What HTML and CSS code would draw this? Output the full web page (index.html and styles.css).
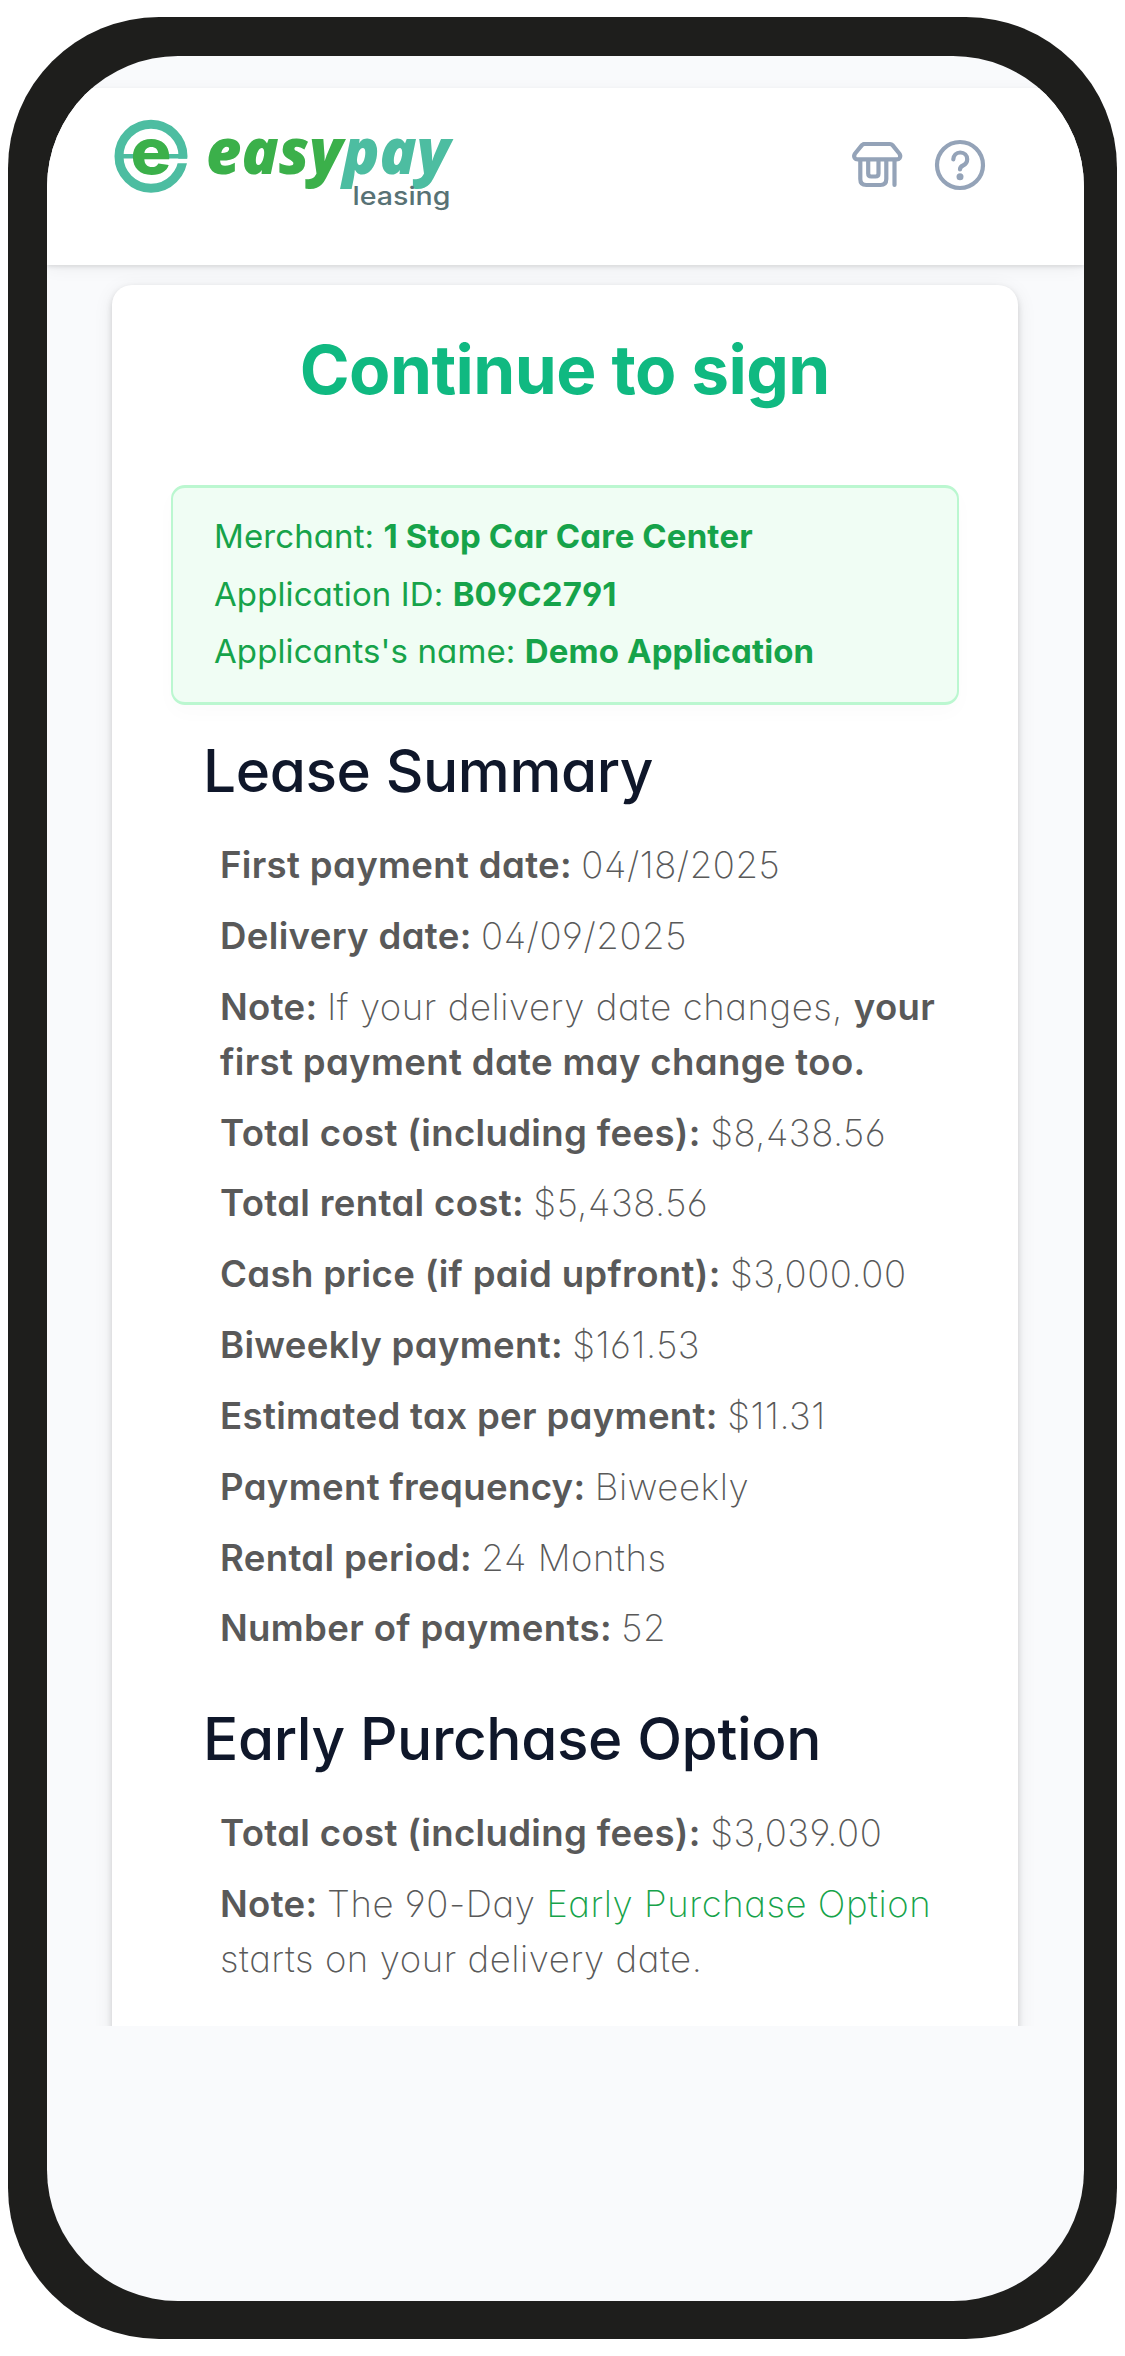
FILE: index.html
```html
<!DOCTYPE html>
<html lang="en">
<head>
<meta charset="utf-8">
<title>Continue to sign</title>
<link rel="stylesheet" href="styles.css">
</head>
<body>
<div class="phone">
  <div class="screen">
    <header class="topbar">
      <svg class="logo" width="350" height="110" viewBox="110 110 350 110" role="img" aria-label="easypay leasing">
        <circle cx="151" cy="156.2" r="32" fill="none" stroke="#4dbda1" stroke-width="9"/>
        <path d="M171 161h18" stroke="#fff" stroke-width="4.4"/>
        <path d="M122 156.3h65" stroke="#4dbda1" stroke-width="4.6"/>
        <text class="logo-e" x="130.5" y="173.500" textLength="41" lengthAdjust="spacingAndGlyphs">e</text>
        <text class="logo-word" x="206" y="174" textLength="244" lengthAdjust="spacingAndGlyphs"><tspan fill="#3bb04a">easy</tspan><tspan fill="#4dbda1">pay</tspan></text>
        <text class="logo-sub" x="352.500" y="205" textLength="98" lengthAdjust="spacingAndGlyphs">leasing</text>
      </svg>
      <nav class="actions">
        <svg width="54" height="54" viewBox="850 138 54 54" class="icon">
          <path d="M863.5 144h26.500q1.500 0 2.500 1.200l6.800 8.300q1.700 2.300.4 4.500q-1 1.400-3 1.400h-39q-2 0-3-1.400q-1.300-2.200.4-4.500l6.800-8.300q1-1.200 2.600-1.200z"/>
          <path d="M860.300 160v19q0 6 6 6h14q6 0 6-6v-19M868.200 160v13.500q0 3 3 3h4.300q3 0 3-3v-13.500M894.500 160v25"/>
        </svg>
        <svg width="54" height="54" viewBox="932.700 137.700 54 54" class="icon">
          <circle cx="959.7" cy="164.700" r="23"/>
          <path d="M953 159c.3-4 3-6.800 6.900-6.800c4.200 0 7 2.900 7 6.700c0 3-1.500 5-4.200 6.300c-2.200 1-3 1.700-3 4"/>
          <circle class="dot" cx="959.700" cy="176.400" r="3.500"/>
        </svg>
      </nav>
    </header>
    <main class="view">
      <section class="card">
        <h1>Continue to sign</h1>
        <div class="info">
          <p>Merchant: <b>1 Stop Car Care Center</b></p>
          <p>Application ID: <b>B09C2791</b></p>
          <p>Applicants's name: <b>Demo Application</b></p>
        </div>
        <h2>Lease Summary</h2>
        <div class="details">
          <p><b>First payment date:</b> 04/18/2025</p>
          <p><b>Delivery date:</b> 04/09/2025</p>
          <p><b>Note:</b> If your delivery date changes, <b>your<br>first payment date may change too.</b></p>
          <p><b>Total cost (including fees):</b> $8,438.56</p>
          <p><b>Total rental cost:</b> $5,438.56</p>
          <p><b>Cash price (if paid upfront):</b> $3,000.00</p>
          <p><b>Biweekly payment:</b> $161.53</p>
          <p><b>Estimated tax per payment:</b> $11.31</p>
          <p><b>Payment frequency:</b> Biweekly</p>
          <p><b>Rental period:</b> 24 Months</p>
          <p><b>Number of payments:</b> 52</p>
        </div>
        <h2 class="second">Early Purchase Option</h2>
        <div class="details">
          <p><b>Total cost (including fees):</b> $3,039.00</p>
          <p><b>Note:</b> The 90-Day <a>Early Purchase Option</a><br>starts on your delivery date.</p>
        </div>
      </section>
    </main>
  </div>
</div>
</body>
</html>
```
FILE: styles.css
```css
* { box-sizing: border-box; }
body {
  margin: 0;
  padding: 17px 8px;
  background: #fff;
  font-family: Inter, "Liberation Sans", sans-serif;
  font-feature-settings: "cv11", "cv02", "cv03", "cv04";
}
h1, h2, p { margin: 0; }
.phone {
  height: 2322px;
  padding: 38.500px 33px 38.500px 39px;
  background: #1e1e1c;
  border-radius: 151px;
}
.screen {
  height: 2245px;
  padding-top: 32.500px;
  background: #f9fafc;
  border-radius: 131px;
  overflow: hidden;
}
.topbar {
  position: relative;
  display: flex;
  justify-content: space-between;
  align-items: flex-start;
  height: 177px;
  padding: 22px 97.500px 0 63px;
  background: #fff;
  box-shadow: 0 2px 4px rgba(0, 0, 0, .1), 0 4px 16px rgba(0, 0, 0, .05);
}
.logo { flex: none; overflow: visible; }
.logo-e { font: 800 64px Inter, sans-serif; fill: #3bb04a; }
.logo-word { font: italic 800 64px "Open Sans", sans-serif; }
.logo-sub { font: 500 25px Inter, sans-serif; fill: #587275; font-feature-settings: normal; }
.actions { display: flex; gap: 28.700px; padding-top: 27.500px; }
.icon {
  fill: none;
  stroke: #94a3b8;
  stroke-width: 4.200;
  stroke-linecap: round;
  stroke-linejoin: round;
}
.icon .dot { fill: #94a3b8; stroke: none; }
.view {
  height: 1761px;
  padding: 19.500px 66.500px 0 65px;
  overflow: hidden;
}
.card {
  height: 1800px;
  padding: 0 59px;
  background: #fff;
  border-radius: 20px;
  box-shadow: 0 3px 6px rgba(0, 0, 0, .15), 0 4px 20px rgba(0, 0, 0, .08);
}
h1 {
  padding-top: 43px;
  height: 200.500px;
  color: #10b981;
  font-size: 67.500px;
  line-height: 84px;
  font-weight: 700;
  letter-spacing: -.55px;
  text-align: center;
}
.info {
  height: 220px;
  padding: 20px 41px;
  background: #f0fdf4;
  border: solid #bbf7d0;
  border-width: 3px 2px;
  border-radius: 14px;
  box-shadow: 0 8px 20px rgba(0, 0, 0, .02);
  color: #16a34a;
  font-size: 33px;
  line-height: 57.500px;
  font-weight: 430;
  letter-spacing: .1px;
}
.info b { font-weight: 700; font-kerning: none; }
h2 {
  margin: 24.500px 0 0 32px;
  color: #0f172a;
  font-size: 58.500px;
  line-height: 82px;
  font-weight: 500;
  letter-spacing: -.4px;
}
h2.second { margin-top: 41.500px; }
.details {
  padding: 26.500px 0 0 49px;
  color: #595959;
  font-size: 36.600px;
  line-height: 55px;
  font-weight: 250;
  letter-spacing: .55px;
  white-space: nowrap;
}
.details p + p { margin-top: 15.850px; }
.details b { font-weight: 600; letter-spacing: .34px; }
.details b:first-child { margin-right: -1.500px; }
.details a { color: #16a34a; }
```
